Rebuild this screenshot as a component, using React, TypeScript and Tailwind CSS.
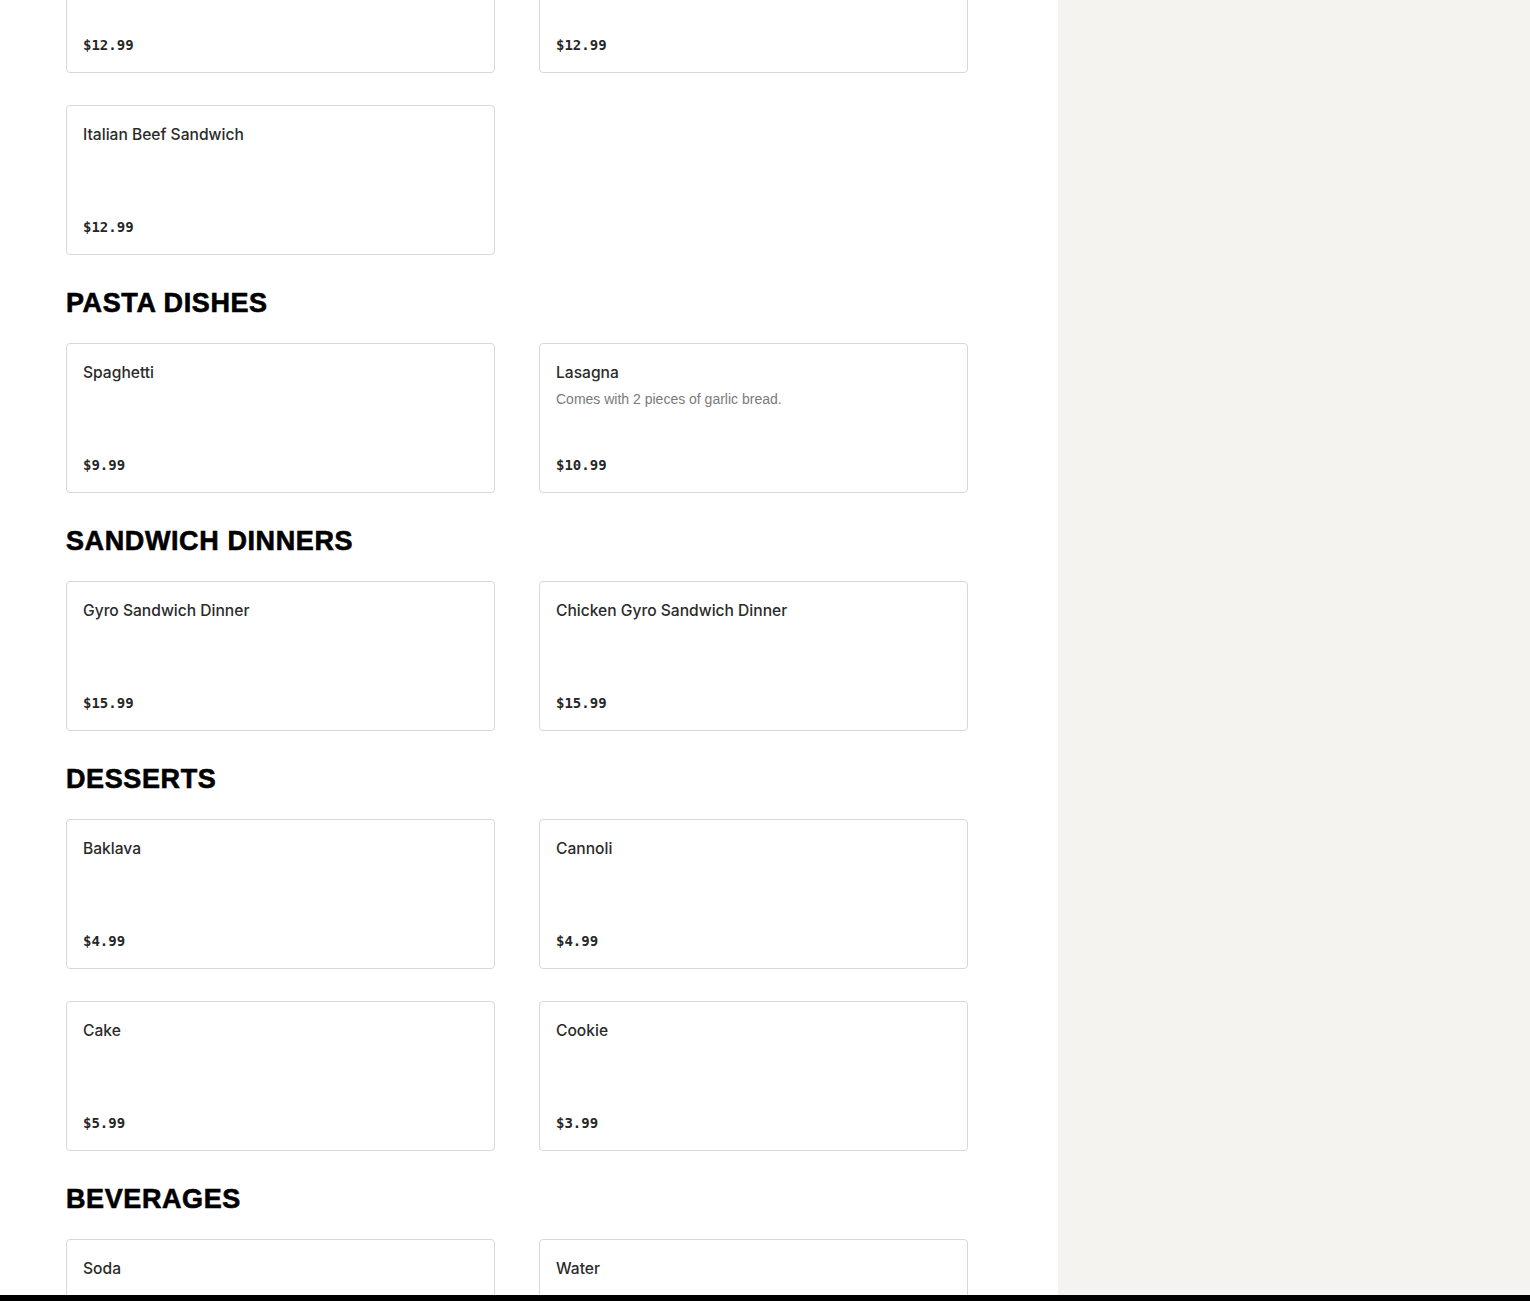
import React from "react";

type Item = { name: string; desc?: string; price: string };
type Section = { title?: string; items: Item[] };

const sections: Section[] = [
  {
    items: [
      { name: "Gyro Sandwich", price: "$12.99" },
      { name: "Chicken Gyro Sandwich", price: "$12.99" },
      { name: "Italian Beef Sandwich", price: "$12.99" },
    ],
  },
  {
    title: "Pasta Dishes",
    items: [
      { name: "Spaghetti", price: "$9.99" },
      { name: "Lasagna", desc: "Comes with 2 pieces of garlic bread.", price: "$10.99" },
    ],
  },
  {
    title: "Sandwich Dinners",
    items: [
      { name: "Gyro Sandwich Dinner", price: "$15.99" },
      { name: "Chicken Gyro Sandwich Dinner", price: "$15.99" },
    ],
  },
  {
    title: "Desserts",
    items: [
      { name: "Baklava", price: "$4.99" },
      { name: "Cannoli", price: "$4.99" },
      { name: "Cake", price: "$5.99" },
      { name: "Cookie", price: "$3.99" },
    ],
  },
  {
    title: "Beverages",
    items: [
      { name: "Soda", price: "$1.99" },
      { name: "Water", price: "$1.49" },
    ],
  },
];

function Card({ item }: { item: Item }) {
  return (
    <div className="h-[150px] rounded-[4px] border border-[#d8d8d8] bg-white px-4 pt-[17px] pb-[17px] flex flex-col justify-between">
      <div>
        <div className="text-[15.6px] leading-6 font-medium text-[#2b2b2b] [font-family:Inter,'Liberation_Sans',sans-serif]">
          {item.name}
        </div>
        {item.desc && (
          <div className="mt-[4px] text-[14px] leading-5 text-[#7a7a7a] [font-family:'Liberation_Sans',Arial,sans-serif]">
            {item.desc}
          </div>
        )}
      </div>
      <div className="text-[14px] leading-5 font-semibold text-[#262626] [font-family:'DejaVu_Sans_Mono','Liberation_Mono',monospace]">
        {item.price}
      </div>
    </div>
  );
}

export default function App() {
  return (
    <div className="h-[1301px] overflow-hidden flex bg-white">
      <main className="w-[1058px] shrink-0 bg-white pl-[66px]">
        <div className="-mt-[77px] w-[902px]">
          {sections.map((s, i) => (
            <section key={i}>
              {s.title && (
                <h2 className="mt-8 mb-6 text-[27px] leading-8 font-bold uppercase tracking-[0.6px] text-black [-webkit-text-stroke:0.6px_black] [font-family:'Liberation_Sans',Arial,sans-serif]">
                  {s.title}
                </h2>
              )}
              <div className="grid grid-cols-2 gap-x-[44px] gap-y-8">
                {s.items.map((it, j) => (
                  <Card key={j} item={it} />
                ))}
              </div>
            </section>
          ))}
        </div>
      </main>
      <aside className="flex-1 bg-[#f4f3ef]" />
      <div className="fixed bottom-0 left-0 right-0 h-[6px] bg-black" />
    </div>
  );
}
